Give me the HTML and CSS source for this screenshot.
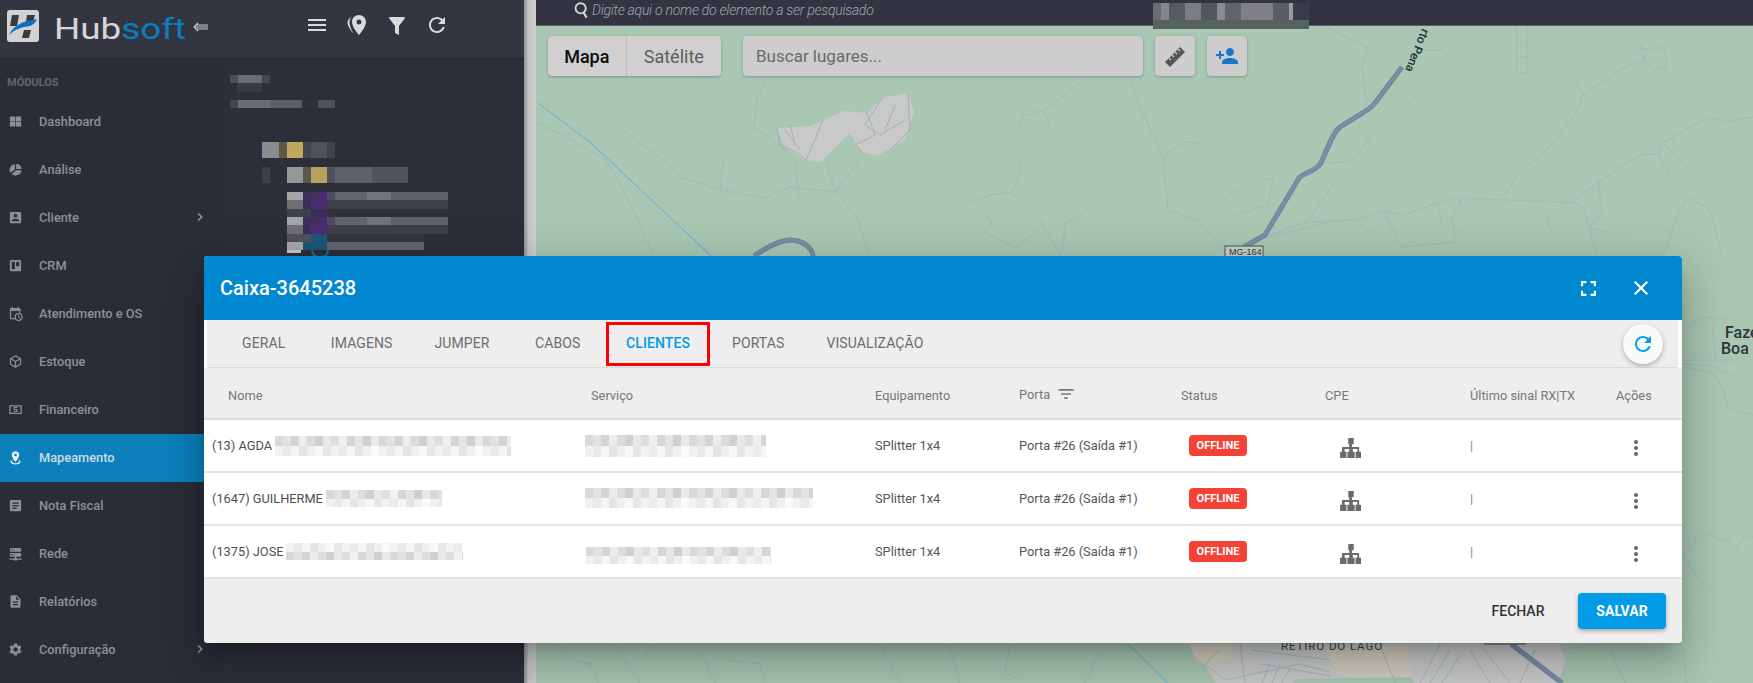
FILE: index.html
```html
<!DOCTYPE html>
<html lang="pt-BR">
<head>
<meta charset="utf-8">
<title>Hubsoft - Mapeamento</title>
<link rel="stylesheet" href="styles.css">
</head>
<body>
<div class="app">
  <aside class="side">
    <div class="brand">
      <svg class="logo" viewBox="0 0 32 32"><rect width="32" height="32" rx="3" fill="#d2d2d2"/><path d="M5 5h7l-2 11H3zM20 5h8l-2 7h-7zM17 20h7l-2 8h-7z" fill="#3b3b3d"/><path d="M2 25C6 16 15 11 30 9c-2 4-4 6-7 7-8 1-15 3-21 9z" fill="#0f6fc0"/></svg>
      <span class="wordmark"><span class="w-hub">Hub</span><span class="w-soft">soft</span></span>
      <svg class="collapse" viewBox="0 0 16 10"><path d="M5 1 1 5l4 4M4 3h11M2 5h13M4 7h11" fill="none" stroke="#c9cacd" stroke-width="1.2"/></svg>
    </div>
    <div class="modules">MÓDULOS</div>
    <nav class="nav">
      <a class="item"><svg class="ic" viewBox="0 0 24 24"><path d="M3 4h8.500v7.500H3zM12.500 4H21v7.500h-8.500zM3 12.500h8.500V20H3zM12.500 12.500H21V20h-8.500z"/></svg>Dashboard</a>
      <a class="item"><svg class="ic" viewBox="0 0 24 24"><path d="M11 3v9.500l-7.500 4.500A10 10 0 0 1 11 3zM13 3a9 9 0 0 1 8.800 8H13zM13 13h8.800A9.500 9.500 0 0 1 6 19z"/></svg>Análise</a>
      <a class="item"><svg class="ic" viewBox="0 0 24 24"><path d="M3 5v14c0 1.100.89 2 2 2h14c1.100 0 2-.9 2-2V5c0-1.100-.9-2-2-2H5c-1.110 0-2 .9-2 2zm12 4c0 1.660-1.340 3-3 3s-3-1.340-3-3 1.340-3 3-3 3 1.340 3 3zm-9 8c0-2 4-3.100 6-3.100s6 1.100 6 3.100v1H6v-1z"/></svg>Cliente<svg class="chev" viewBox="0 0 24 24"><path d="M10 6 8.590 7.410 13.170 12l-4.580 4.590L10 18l6-6z"/></svg></a>
      <a class="item"><svg class="ic" viewBox="0 0 24 24"><path fill-rule="evenodd" d="M5 3h14a2 2 0 0 1 2 2v14a2 2 0 0 1-2 2H5a2 2 0 0 1-2-2V5a2 2 0 0 1 2-2zm1 3v12h5V6zm7 0v7h5V6z"/></svg>CRM</a>
      <a class="item"><svg class="ic" viewBox="0 0 24 24"><path fill-rule="evenodd" d="M6 1h2v2h7V1h2v2h1a2 2 0 0 1 2 2v6h-2V8H5v11h6v2H5a2 2 0 0 1-2-2V5a2 2 0 0 1 2-2h1z"/><path fill-rule="evenodd" d="M17 11a6.500 6.500 0 1 1 0 13 6.500 6.500 0 0 1 0-13zm0 2a4.500 4.500 0 1 0 0 9 4.500 4.500 0 0 0 0-9zm-.8 1.500h1.500v3l2.300 1.300-.7 1.200-3.100-1.800z"/></svg>Atendimento e OS</a>
      <a class="item"><svg class="ic" viewBox="0 0 24 24"><path d="M21 16.500c0 .38-.21.71-.53.88l-7.900 4.440c-.16.12-.36.18-.57.18s-.41-.06-.57-.18l-7.900-4.440A.991.991 0 0 1 3 16.500v-9c0-.38.21-.71.53-.88l7.900-4.440c.16-.12.36-.18.57-.18s.41.06.57.18l7.900 4.440c.32.17.53.5.53.88v9zM12 4.150 6.040 7.500 12 10.850l5.960-3.350L12 4.150zM5 15.910l6 3.380v-6.710L5 9.210v6.700zm14 0v-6.700l-6 3.370v6.710l6-3.380z"/></svg>Estoque</a>
      <a class="item"><svg class="ic" viewBox="0 0 24 24"><path fill-rule="evenodd" d="M2 5h20v14H2zm2 2v10h16V7z"/><path d="M9 8h6v1.600h-4v1.600h4V16H9v-1.600h4v-1.600H9z"/></svg>Financeiro</a>
      <a class="item active"><svg class="ic" viewBox="0 0 24 24"><path d="M12 2C15.310 2 18 4.660 18 7.950C18 12.410 12 19 12 19S6 12.410 6 7.950C6 4.660 8.690 2 12 2M12 6A2 2 0 0 0 10 8A2 2 0 0 0 12 10A2 2 0 0 0 14 8A2 2 0 0 0 12 6M20 19C20 21.210 16.420 23 12 23S4 21.210 4 19C4 17.710 5.220 16.560 7.110 15.830L7.750 16.740C6.670 17.190 6 17.810 6 18.500C6 19.880 8.690 21 12 21S18 19.880 18 18.500C18 17.810 17.330 17.190 16.250 16.740L16.890 15.830C18.780 16.560 20 17.710 20 19Z"/></svg>Mapeamento</a>
      <a class="item"><svg class="ic" viewBox="0 0 24 24"><path d="M19 3H5c-1.100 0-2 .9-2 2v14c0 1.100.9 2 2 2h14c1.100 0 2-.9 2-2V5c0-1.100-.9-2-2-2zm-5 14H7v-2h7v2zm3-4H7v-2h10v2zm0-4H7V7h10v2z"/></svg>Nota Fiscal</a>
      <a class="item"><svg class="ic" viewBox="0 0 24 24"><path d="M13 19h1a1 1 0 0 1 1 1h7v2h-7a1 1 0 0 1-1 1h-4a1 1 0 0 1-1-1H2v-2h7a1 1 0 0 1 1-1h1v-2H4a1 1 0 0 1-1-1v-4a1 1 0 0 1 1-1h16a1 1 0 0 1 1 1v4a1 1 0 0 1-1 1h-7v2zM4 3h16a1 1 0 0 1 1 1v4a1 1 0 0 1-1 1H4a1 1 0 0 1-1-1V4a1 1 0 0 1 1-1zm5 4h1V5H9v2zm0 8h1v-2H9v2zM5 5v2h2V5H5zm0 8v2h2v-2H5z"/></svg>Rede</a>
      <a class="item"><svg class="ic" viewBox="0 0 24 24"><path d="M14 2H6c-1.100 0-1.990.9-1.990 2L4 20c0 1.100.89 2 1.990 2H18c1.100 0 2-.9 2-2V8l-6-6zm2 16H8v-2h8v2zm0-4H8v-2h8v2zm-3-5V3.500L18.500 9H13z"/></svg>Relatórios</a>
      <a class="item"><svg class="ic" viewBox="0 0 24 24"><path d="M19.140 12.940c.04-.3.06-.61.06-.94 0-.32-.02-.64-.07-.94l2.030-1.580c.18-.14.23-.41.12-.61l-1.920-3.320c-.12-.22-.37-.29-.59-.22l-2.390.96c-.5-.38-1.030-.7-1.620-.94L14.400 2.810c-.04-.24-.24-.41-.48-.41h-3.840c-.24 0-.43.17-.47.41L9.250 5.350c-.59.24-1.130.57-1.620.94l-2.390-.96c-.22-.08-.47 0-.59.22L2.740 8.870c-.12.21-.08.47.12.61l2.030 1.580c-.05.3-.09.63-.09.94s.02.64.07.94l-2.030 1.580c-.18.14-.23.41-.12.61l1.920 3.320c.12.22.37.29.59.22l2.390-.96c.5.38 1.030.7 1.620.94l.36 2.540c.05.24.24.41.48.41h3.840c.24 0 .44-.17.47-.41l.36-2.540c.59-.24 1.130-.56 1.620-.94l2.390.96c.22.08.47 0 .59-.22l1.920-3.320c.12-.22.07-.47-.12-.61l-2.010-1.580zM12 15.600c-1.980 0-3.600-1.620-3.600-3.600s1.620-3.600 3.600-3.600 3.600 1.620 3.600 3.600-1.620 3.600-3.600 3.600z"/></svg>Configuração<svg class="chev" viewBox="0 0 24 24"><path d="M10 6 8.590 7.410 13.170 12l-4.580 4.590L10 18l6-6z"/></svg></a>
    </nav>
  </aside>

  <section class="tree">
    <div class="tree-head">
      <svg class="th-ic" viewBox="0 0 24 24"><path d="M3 18h18v-2H3v2zm0-5h18v-2H3v2zm0-7v2h18V6H3z"/></svg>
      <svg class="th-ic" viewBox="0 0 24 24"><path d="M14 2c-3.900 0-7 3.100-7 7 0 5.200 7 13 7 13s7-7.800 7-13c0-3.900-3.100-7-7-7zm0 9.500a2.500 2.500 0 1 1 0-5 2.500 2.500 0 0 1 0 5z"/><path d="M6.500 4C4 5.500 2.500 7 2.500 9.500c0 3.500 4 9 6 11-1.500-3-4-7-4-11 0-2 .7-4 2-5.500z"/></svg>
      <svg class="th-ic" viewBox="0 0 24 24"><path d="M4.250 5.610C6.270 8.200 10 13 10 13v7l4 2v-9s3.720-4.800 5.740-7.390A1 1 0 0 0 18.950 4H5.040a1 1 0 0 0-.79 1.610z"/></svg>
      <svg class="th-ic" viewBox="0 0 24 24"><path d="M17.650 6.350C16.200 4.900 14.210 4 12 4c-4.420 0-7.990 3.580-7.990 8s3.570 8 7.990 8c3.730 0 6.840-2.550 7.730-6h-2.080c-.82 2.330-3.040 4-5.650 4-3.310 0-6-2.690-6-6s2.690-6 6-6c1.660 0 3.140.69 4.220 1.780L13 11h7V4l-2.350 2.350z"/></svg>
    </div>
    <div class="tree-body">
      <div class="tr t1"></div>
      <div class="tr t2"></div>
      <div class="tr t3"></div>
      <div class="tr t4"></div>
      <div class="tr t5"></div>
      <div class="tr t6"></div>
      <div class="tr t7"></div>
      <div class="tr t8"></div>
      <div class="tr t9"></div>
      <div class="tr t10"></div>
      <div class="tr t11"></div>
      <div class="tr t12"></div>
      <div class="tr t13"></div>
    </div>
  </section>

  <div class="gutter"></div>

  <main class="map">
    <div class="topbar">
      <svg class="tb-search" viewBox="0 0 20 20"><circle cx="9" cy="8" r="6" fill="none" stroke="#d6d7da" stroke-width="2.200"/><path d="m12.500 13 3.500 6" stroke="#d6d7da" stroke-width="2.500" fill="none"/></svg>
      <span class="tb-hint">Digite aqui o nome do elemento a ser pesquisado</span>
      <div class="tb-blur"></div>
    </div>
    <div class="canvas">
      <svg class="mapsvg" viewBox="536 26 1217 657" width="1217" height="657">
        <path class="urban" d="M1190 644 1560 644 1566 660 1558 683H1216L1205 665z"/>
        <path class="sand" d="M1189 644 1234 644 1226 660 1212 668 1197 660zM1325 650 1408 644 1412 683 1340 676z"/>
        <path class="green" d="M1295 679 1412 677 1414 683H1292z"/>
        <path class="urban" d="M777 128 811 126 823 120 844 111 867 113 882 98 908 93 914 113 905 140 877 156 862 152 849 133 836 147 821 162 806 160 785 147z"/>
        <g class="thin">
          <path d="M703 76 734 107 754 127 777 143 795 160 799 197"/>
          <path d="M767 76 757 100 754 127"/>
          <path d="M617 124 635 140 668 163 683 178 721 190 765 198 790 187 836 192 857 217 869 256"/>
          <path d="M826 163 836 192M862 157 836 192M683 178 665 195M723 160 720 190"/>
          <path d="M538 123 566 137 606 160 622 187 647 240 652 256M538 173 566 140"/>
          <path d="M1089 76 1071 90 1050 107 1022 117 1020 125M1043 110 1050 127 1045 132"/>
          <path d="M1129 76 1140 107 1163 157 1168 210 1198 220 1229 256M1163 157 1183 142 1201 143"/>
          <path d="M1020 157 1020 173 1012 192 1040 220 1061 256M1012 192 989 195 971 203"/>
          <path d="M1089 210 1066 223 1061 256M984 213 992 223 984 233 1015 247 1040 230"/>
          <path d="M1330 222 1270 237M1263 178 1273 180 1268 205 1235 215 1222 200 1245 185"/>
          <path d="M1325 27 1368 47 1362 67 1367 103M1422 50 1443 50 1450 58"/>
          <path d="M1517 27 1517 73 1527 73 1527 27M1517 40 1527 40M1517 57 1527 57"/>
          <path d="M1418 95 1407 103 1373 133 1363 147 1350 162 1323 163"/>
          <path d="M1637 47 1650 50 1665 47 1667 67 1653 70 1645 60 1628 65 1583 95 1578 110 1550 147 1520 172 1502 198"/>
          <path d="M1573 77 1583 95M1640 45 1645 60"/>
          <path d="M1265 237 1307 222 1355 220 1383 211 1403 215 1453 198 1563 202 1572 202 1623 165 1643 154 1658 154 1663 143 1707 118 1727 122 1753 117"/>
          <path d="M1338 178 1307 222M1355 220 1370 232"/>
          <path d="M1383 211 1402 247 1455 242 1452 217 1462 198M1453 223 1467 237M1437 203 1442 223"/>
          <path d="M1563 202 1547 220 1552 232M1572 202 1583 207 1597 255M1598 182 1602 210 1590 228 1607 232"/>
          <path d="M1658 154 1670 178M1663 143 1688 167M1672 140 1693 160"/>
          <path d="M1663 256 1675 220 1687 197 1710 210 1722 255"/>
          <path d="M1683 330 1702 318 1727 318M1713 327 1715 360M1683 360 1740 360M1683 367 1713 373 1725 393 1727 408 1753 415M1683 364 1712 366 1735 376"/>
          <path d="M1683 557 1703 533 1730 543 1737 550 1743 538 1753 537M1683 557 1708 592"/>
          <path d="M1684 650 1686 683M560 645 572 660 590 664 598 683M615 645 640 683M645 660 650 645M700 650 715 683M730 660 760 664 765 683M880 645 900 683M950 645 960 683M1010 645 1005 672 1020 680M1100 650 1085 683"/>
          <path d="M1220 650 1205 664 1225 680 1300 664 1330 672M1240 644 1245 683M1252 650 1330 660M1262 664 1330 676M1270 664 1262 683M1280 664 1272 683M1290 668 1282 683M1380 644 1395 683M1440 644 1420 683M1450 650 1430 683M1460 655 1442 683M1470 650 1490 683M1480 644 1510 683M1535 650 1520 683M1560 650 1600 644M1610 650 1625 683"/>
        </g>
        <g class="thin track">
          <path d="M777 128 780 145 796 152 806 160 815 140 823 120M785 130 800 150M790 125 795 145M867 113 875 135 855 145 862 152M882 98 865 125 880 135 905 120M895 105 885 130M908 93 910 130 890 150"/>
        </g>
        <path class="river" d="M538 103 591 143 711 256M1128 644 1168 683"/>
        <path class="road-edge" d="M754 256C770 245 783 239 792 240 804 241 812 248 813 256M1402 67 1375 103C1370 109 1367 110 1340 127 1335 131 1333 135 1321 163 1316 171 1306 172 1299 178L1265 235 1244 247M1511 644 1562 683"/>
        <path class="road" d="M754 256C770 245 783 239 792 240 804 241 812 248 813 256M1402 67 1375 103C1370 109 1367 110 1340 127 1335 131 1333 135 1321 163 1316 171 1306 172 1299 178L1265 235 1244 247M1511 644 1562 683"/>
        <g class="shield"><rect x="1225" y="246" width="38" height="11"/><text class="shield-t" x="1229" y="255">MG-164</text></g>
        <rect class="shield-box" x="1485" y="630" width="40" height="14"/>
        <text class="roadname" transform="translate(1422 28) rotate(112)">rto Pena</text>
        <text class="place" x="1725" y="338">Faze</text>
        <text class="place" x="1721" y="354">Boa</text>
        <text class="retiro" x="1281" y="650">RETIRO DO LAGO</text>
      </svg>
      <div class="controls">
        <div class="maptype"><span class="mt mt-on">Mapa</span><span class="mt">Satélite</span></div>
        <div class="places">Buscar lugares...</div>
        <div class="mapbtn"><svg viewBox="0 0 24 24" class="m-ic"><path d="M2 18 17 3l5 5L7 23z" fill="#555"/><path d="M6 14l2 2M9 11l2 2M12 8l2 2M15 5l2 2" stroke="#cfcfcf" stroke-width="1.200"/></svg></div>
        <div class="mapbtn"><svg viewBox="0 0 24 24" class="m-ic"><path d="M15 12c2.210 0 4-1.790 4-4s-1.790-4-4-4-4 1.790-4 4 1.790 4 4 4zm-9-2V7H4v3H1v2h3v3h2v-3h3v-2H6zm9 4c-2.670 0-8 1.340-8 4v2h16v-2c0-2.660-5.330-4-8-4z" fill="#1976c8"/></svg></div>
      </div>
    </div>
  </main>

  <div class="modal">
    <header class="m-head">
      <h2 class="m-title">Caixa-3645238</h2>
      <svg class="mh-ic mh-full" viewBox="5 5 14 14"><path d="M7 14H5v5h5v-2H7v-3zm-2-4h2V7h3V5H5v5zm12 7h-3v2h5v-5h-2v3zM14 5v2h3v3h2V5h-5z"/></svg>
      <svg class="mh-ic" viewBox="5 5 14 14"><path d="M19 6.410 17.590 5 12 10.590 6.410 5 5 6.410 10.590 12 5 17.590 6.410 19 12 13.410 17.590 19 19 17.590 13.410 12z"/></svg>
    </header>
    <div class="tabs">
      <span class="tab">GERAL</span>
      <span class="tab tab-wide">IMAGENS</span>
      <span class="tab">JUMPER</span>
      <span class="tab tab-wide">CABOS</span>
      <span class="tab tab-on tab-wide">CLIENTES</span>
      <span class="tab">PORTAS</span>
      <span class="tab">VISUALIZAÇÃO</span>
      <button class="fab"><svg viewBox="0 0 24 24"><path d="M17.650 6.350C16.200 4.900 14.210 4 12 4c-4.420 0-7.990 3.580-7.990 8s3.570 8 7.990 8c3.730 0 6.840-2.550 7.730-6h-2.080c-.82 2.330-3.040 4-5.650 4-3.310 0-6-2.690-6-6s2.690-6 6-6c1.660 0 3.140.69 4.220 1.780L13 11h7V4l-2.350 2.350z"/></svg></button>
    </div>
    <div class="grid ghead">
      <span class="pl-name">Nome</span>
      <span class="pl-serv">Serviço</span>
      <span>Equipamento</span>
      <span class="porta">Porta<svg viewBox="0 0 24 24"><path d="M10 18h4v-2h-4v2zM3 6v2h18V6H3zm3 7h12v-2H6v2z"/></svg></span>
      <span>Status</span>
      <span>CPE</span>
      <span>Último sinal RX|TX</span>
      <span>Ações</span>
    </div>
    <div class="grid grow">
      <span class="cell-name">(13) AGDA<i class="blur n1"></i></span>
      <span><i class="blur s1"></i></span>
      <span>SPlitter 1x4</span>
      <span>Porta #26 (Saída #1)</span>
      <span class="pl-badge"><b class="badge">OFFLINE</b></span>
      <span class="pl-cpe"><svg class="cpe" viewBox="0 0 24 22"><path d="M9 0h6v7h-2v3h7a1 1 0 0 1 1 1v4h2v7h-6v-7h2v-3h-5v3h2v7H8v-7h2v-3H5v3h2v7H0v-7h2v-4a1 1 0 0 1 1-1h7V7H9z"/></svg></span>
      <span class="sig">|</span>
      <span class="pl-act"><svg class="kebab" viewBox="0 0 24 24"><path d="M12 8c1.100 0 2-.9 2-2s-.9-2-2-2-2 .9-2 2 .9 2 2 2zm0 2c-1.100 0-2 .9-2 2s.9 2 2 2 2-.9 2-2-.9-2-2-2zm0 6c-1.100 0-2 .9-2 2s.9 2 2 2 2-.9 2-2-.9-2-2-2z"/></svg></span>
    </div>
    <div class="grid grow">
      <span class="cell-name">(1647) GUILHERME<i class="blur n2"></i></span>
      <span><i class="blur s2"></i></span>
      <span>SPlitter 1x4</span>
      <span>Porta #26 (Saída #1)</span>
      <span class="pl-badge"><b class="badge">OFFLINE</b></span>
      <span class="pl-cpe"><svg class="cpe" viewBox="0 0 24 22"><path d="M9 0h6v7h-2v3h7a1 1 0 0 1 1 1v4h2v7h-6v-7h2v-3h-5v3h2v7H8v-7h2v-3H5v3h2v7H0v-7h2v-4a1 1 0 0 1 1-1h7V7H9z"/></svg></span>
      <span class="sig">|</span>
      <span class="pl-act"><svg class="kebab" viewBox="0 0 24 24"><path d="M12 8c1.100 0 2-.9 2-2s-.9-2-2-2-2 .9-2 2 .9 2 2 2zm0 2c-1.100 0-2 .9-2 2s.9 2 2 2 2-.9 2-2-.9-2-2-2zm0 6c-1.100 0-2 .9-2 2s.9 2 2 2 2-.9 2-2-.9-2-2-2z"/></svg></span>
    </div>
    <div class="grid grow">
      <span class="cell-name">(1375) JOSE<i class="blur n3 flip"></i></span>
      <span><i class="blur s3"></i></span>
      <span>SPlitter 1x4</span>
      <span>Porta #26 (Saída #1)</span>
      <span class="pl-badge"><b class="badge">OFFLINE</b></span>
      <span class="pl-cpe"><svg class="cpe" viewBox="0 0 24 22"><path d="M9 0h6v7h-2v3h7a1 1 0 0 1 1 1v4h2v7h-6v-7h2v-3h-5v3h2v7H8v-7h2v-3H5v3h2v7H0v-7h2v-4a1 1 0 0 1 1-1h7V7H9z"/></svg></span>
      <span class="sig">|</span>
      <span class="pl-act"><svg class="kebab" viewBox="0 0 24 24"><path d="M12 8c1.100 0 2-.9 2-2s-.9-2-2-2-2 .9-2 2 .9 2 2 2zm0 2c-1.100 0-2 .9-2 2s.9 2 2 2 2-.9 2-2-.9-2-2-2zm0 6c-1.100 0-2 .9-2 2s.9 2 2 2 2-.9 2-2-.9-2-2-2z"/></svg></span>
    </div>
    <footer class="m-foot">
      <button class="btn-text">FECHAR</button>
      <button class="btn-save">SALVAR</button>
    </footer>
  </div>
</div>
</body>
</html>
```

FILE: styles.css
```css
:root {
  --dark: linear-gradient(90deg, #d9d9d9 0 8px, #e2e2e2 8px 16px, #d4d4d4 16px 24px, #ececec 24px 32px, #dcdcdc 32px 40px, #d0d0d0 40px 48px, #e8e8e8 48px 56px, #dedede 56px 64px, #f0f0f0 64px 72px, #d6d6d6 72px 80px, #e4e4e4 80px 88px, #cfcfcf 88px 96px, #e9e9e9 96px 104px);
  --light: linear-gradient(90deg, #f1f1f1 0 8px, #e9e9e9 8px 16px, #f5f5f5 16px 24px, #e4e4e4 24px 32px, #efefef 32px 40px, #f8f8f8 40px 48px, #e7e7e7 48px 56px, #f2f2f2 56px 64px, #ebebeb 64px 72px, #f6f6f6 72px 80px, #e5e5e5 80px 88px, #f0f0f0 88px 96px, #fafafa 96px 104px);
}
* { box-sizing: border-box; }
html, body { margin: 0; height: 100%; overflow: hidden; }
body { font-family: Roboto, "Liberation Sans", sans-serif; font-size: 13px; background: #2b2e39; }
.app { position: relative; display: flex; width: 1753px; height: 683px; overflow: hidden; }

/* sidebar */
.side { width: 223px; flex: none; background: #2a2d38; }
.brand { height: 59px; display: flex; align-items: flex-start; background: #333641; border-bottom: 1px solid #25272f; padding: 10px 0 0 7px; }
.logo { width: 32px; height: 32px; flex: none; }
.wordmark { display: inline-block; width: 136px; margin: -2px 0 0 15px; font-size: 29px; line-height: 42px; transform: scaleX(1.27); transform-origin: 0 50%; white-space: nowrap; font-weight: 400; }
.w-hub { color: #d6d6d9; }
.w-soft { color: #0a7fbe; }
.collapse { width: 16px; height: 10px; margin: 12px 0 0 3px; flex: none; }
.modules { height: 39px; padding: 17px 0 0 7px; font-size: 11px; font-weight: 700; line-height: 14px; color: #63656d; }
.nav { display: flex; flex-direction: column; }
.item { position: relative; display: flex; align-items: center; height: 48px; padding: 0 0 2px 8px; color: #8e9096; font-weight: 500; font-size: 12.800px; }
.item.active { background: #0b80bb; color: #cfdbe4; }
.ic { width: 15px; height: 15px; margin-right: 16px; fill: #8e8f94; flex: none; }
.active .ic { fill: #e6eef3; }
.chev { width: 16px; height: 16px; fill: #a2a3a7; margin-left: auto; margin-right: 15px; }

/* tree panel */
.tree { width: 301px; flex: none; background: #2c2f3a; }
.tree-head { height: 59px; display: flex; align-items: flex-start; justify-content: center; gap: 16px; padding: 13px 0 0 6px; background: #333641; border-bottom: 1px solid #25272f; }
.th-ic { width: 24px; height: 24px; fill: #d9dadc; flex: none; }
.tree-body { padding-top: 16px; }
.tr { height: 8.300px; }
.t1 { margin-left: 7px; width: 40px; background: linear-gradient(90deg, #4b4d57 0 8px, #6a6c74 8px 32px, #45474f 32px); }
.t2 { margin-left: 14px; width: 25px; background: #383a45; }
.t3 { margin-left: 7px; width: 105px; background: linear-gradient(90deg, #44464f 0 8px, #6b6d75 8px 40px, #5c5e67 40px 72px, #2f323d 72px 88px, #50525b 88px); margin-bottom: 34px; height: 16.600px; background-size: 100% 50%; background-position: 0 100%; background-repeat: no-repeat; }
.t4 { margin-left: 39px; width: 73px; height: 16px; margin-bottom: 9px; background: linear-gradient(90deg, #8b8c90 0 17px, #5c5848 17px 25px, #c2a85f 25px 41px, #45464c 41px 49px, #50525a 49px 65px, #3f414b 65px); }
.t5 { margin-left: 39px; width: 146px; height: 16px; margin-bottom: 9px; background: linear-gradient(90deg, #3d3f49 0 8px, transparent 8px 25px, #96979b 25px 41px, #5b5749 41px 49px, #b8a060 49px 65px, #50505a 65px 73px, #5e606a 73px 110px, #51535d 110px); }
.t6, .t9 { margin-left: 64px; width: 161px; background: linear-gradient(90deg, #a5a6a9 0 16px, #41305f 16px 32px, #4a2d73 32px 40px, #4f4a66 40px 48px, #62646e 48px 80px, #71737b 80px 104px, #5f616b 104px); }
.t7, .t10 { margin-left: 64px; width: 161px; background: linear-gradient(90deg, #6f7075 0 16px, #3a2d59 16px 24px, #4a2d73 24px 40px, #3d3f4a 40px); }
.t8 { margin-left: 64px; width: 50px; background: linear-gradient(90deg, #3e404a 0 24px, #3a2d59 24px 40px, #33303f 40px); }
.t11 { margin-left: 64px; width: 137px; background: linear-gradient(90deg, #50525b 0 24px, #1d5775 24px 40px, #33353f 40px); }
.t12 { margin-left: 64px; width: 137px; background: linear-gradient(90deg, #a8a9ab 0 16px, #1d5775 16px 40px, #62646e 40px); }
.t13 { position: relative; margin-left: 64px; width: 14px; height: 3px; background: #c8c8c8; }
.t13::after { content: ""; position: absolute; left: 24px; top: 0; width: 14px; height: 6px; border: 2px solid #1d6d94; border-top: 0; border-radius: 0 0 8px 8px; }

.gutter { width: 12px; flex: none; background: linear-gradient(90deg, #8f8f8f, #c8c8c8 40%, #cfcfcf); }

/* map */
.map { flex: 1; display: flex; flex-direction: column; min-width: 0; }
.topbar { position: relative; z-index: 3; height: 26px; flex: none; display: flex; align-items: flex-start; padding-left: 37px; background: #323541; border-bottom: 1px solid #5a5f66; }
.tb-search { width: 17px; height: 18px; margin-top: 1px; flex: none; }
.tb-hint { margin: 1px 0 0 2px; font-size: 14px; letter-spacing: -.25px; line-height: 18px; font-style: italic; font-weight: 300; color: #a3a5ab; white-space: nowrap; }
.tb-blur { position: absolute; left: 617px; top: 3px; width: 156px; height: 26px; background:
  linear-gradient(#56625f, #56625f) 0 100% / 100% 9px no-repeat,
  linear-gradient(90deg, #6b6d74 0 8px, #85868b 8px 16px, #565862 16px 32px, #7c7d83 32px 48px, #53555f 48px 64px, #8a8b90 64px 72px, #62646d 72px 88px, #7f8086 88px 120px, #5b5d66 120px 136px, #9a9a9e 136px 140px, #3a3d47 140px);
}
.canvas { position: relative; flex: 1; background: #a9c7b3; overflow: hidden; }
.mapsvg { position: absolute; left: 0; top: 0; display: block; }
.thin path { fill: none; stroke: #a8b3c0; stroke-width: 1; stroke-linejoin: round; }
.track path { stroke: #a8acb4; }
.urban { fill: #c8cac9; }
.sand { fill: #d2cdc0; }
.green { fill: #a9c7b3; }
.river { fill: none; stroke: #7db6cf; stroke-width: 1.500; }
.road-edge { fill: none; stroke: #6a7f98; stroke-width: 5; stroke-linejoin: round; }
.road { fill: none; stroke: #7a8fa6; stroke-width: 3.500; stroke-linejoin: round; }
.shield rect, .shield-box { fill: #c8d2c8; stroke: #4a4f52; stroke-width: 1; }
.shield-t { font-family: "Liberation Sans", sans-serif; font-size: 9px; fill: #333; }
.roadname { font-family: Roboto, sans-serif; font-size: 12px; font-weight: 500; fill: #26303c; }
.place { font-family: Roboto, sans-serif; font-size: 16px; font-weight: 500; fill: #2f3338; }
.retiro { font-family: Roboto, sans-serif; font-size: 11.500px; fill: #3c4044; letter-spacing: .9px; }
.controls { position: relative; display: flex; height: 40px; margin: 10px 0 0 12px; }
.maptype { display: flex; width: 173px; height: 40px; border-radius: 4px; background: #d0d0d0; box-shadow: 0 1px 3px rgba(0,0,0,.25); overflow: hidden; }
.mt { display: flex; align-items: center; justify-content: center; flex: 95; font-size: 18px; color: #5e5e5e; }
.mt-on { flex: 78; color: #0b0b0b; font-weight: 500; border-right: 1px solid #bdbdbd; }
.places { width: 400px; height: 40px; margin-left: 22px; padding-left: 13px; border-radius: 4px; background: #cdcdcd; color: #6a6a6a; font-size: 17px; line-height: 40px; box-shadow: 0 1px 3px rgba(0,0,0,.25); }
.mapbtn { width: 40px; height: 40px; margin-left: 12px; display: flex; align-items: center; justify-content: center; border-radius: 4px; background: #cdcdcd; box-shadow: 0 1px 3px rgba(0,0,0,.25); }
.m-ic { width: 24px; height: 24px; }

/* modal */
.modal { position: absolute; left: 204px; top: 256px; width: 1478px; height: 387px; display: flex; flex-direction: column; background: #fff; border-radius: 4px; box-shadow: 0 11px 15px -7px rgba(0,0,0,.2), 0 24px 38px 3px rgba(0,0,0,.14), 0 9px 46px 8px rgba(0,0,0,.12); }
.m-head { height: 64px; flex: none; display: flex; align-items: center; padding: 0 34px 0 16px; background: #0288d1; border-radius: 4px 4px 0 0; }
.m-title { margin: 0 auto 0 0; font-size: 20px; font-weight: 500; color: #fff; }
.mh-ic { width: 14px; height: 14px; fill: #fff; margin-left: 38px; flex: none; }
.mh-ic.mh-full { width: 15px; height: 15px; }
.tabs { height: 48px; flex: none; display: flex; align-items: center; margin: 0 4px 0 3px; padding-left: 14px; background: #eee; border-bottom: 1px solid #dcdcdc; }
.tab { position: relative; padding: 0 21px; height: 100%; line-height: 46px; font-size: 14px; color: #6d6d6d; font-weight: 400; letter-spacing: .1px; }
.tab-wide { margin-left: 3.500px; }
.tab-on { color: #039be5; font-weight: 500; }
.tab-on::after { content: ""; position: absolute; left: 1px; right: 1px; top: 2px; bottom: 1px; border: 3px solid #f00; }
.fab { margin: 0 15px 0 auto; width: 40px; height: 40px; padding: 8px; border: 0; border-radius: 50%; background: #fafafa; box-shadow: 0 2px 5px rgba(0,0,0,.28); }
.fab svg { display: block; width: 24px; height: 24px; fill: #03a0ea; }
.grid { display: grid; grid-template-columns: 381px 290px 144px 162px 144px 145px 146px 66px; align-items: center; flex: none; }
.ghead { height: 52px; padding-top: 4px; background: #eee; border-bottom: 2px solid #dcdcdc; color: #777; font-size: 12.800px; }
.pl-name { padding-left: 24px; }
.pl-serv { padding-left: 6px; }
.porta { display: flex; align-items: center; margin-top: -2px; }
.porta svg { width: 20px; height: 20px; margin-left: 6px; fill: #777; }
.grow { height: 53px; background: #fff; border-bottom: 2px solid #e3e3e3; color: #555; font-size: 12.800px; }
.cell-name { display: flex; align-items: center; padding-left: 8px; color: #4e4e4e; white-space: nowrap; }
.blur { display: block; background: var(--dark) 0 0 / 104px 50% repeat-x, var(--light) 0 100% / 104px 50% repeat-x; }
.blur.flip { background: var(--light) 0 0 / 104px 50% repeat-x, var(--dark) 0 100% / 104px 50% repeat-x; }
.n1 { width: 236px; height: 20px; margin-left: 3px; }
.n2 { width: 116px; height: 17px; margin-left: 3px; }
.n3 { width: 177px; height: 17px; margin-left: 2px; margin-top: -1px; }
.s1 { width: 181px; height: 22px; }
.s2 { width: 228px; height: 20px; margin-top: -2px; }
.s3 { width: 185px; height: 17px; margin: 7px 0 0 1px; }
.pl-badge { padding-left: 8px; display: flex; }
.badge { display: block; width: 58px; height: 21px; border-radius: 4px; background: #f44336; color: #fff; font-size: 11px; font-weight: 700; line-height: 21px; text-align: center; }
.pl-cpe { padding-left: 15px; display: flex; }
.cpe { width: 22px; height: 20px; fill: #6b6b6b; margin-top: 5px; }
.sig { color: #888; }
.pl-act { padding-left: 8px; display: flex; }
.kebab { width: 24px; height: 24px; fill: #666; margin-top: 5px; }
.m-foot { flex: 1; display: flex; align-items: flex-start; justify-content: flex-end; padding: 14px 16px 0 0; background: #eee; border-radius: 0 0 4px 4px; }
.btn-text { width: 54px; height: 36px; margin-right: 33px; padding: 0; border: 0; background: none; font: 500 14px Roboto, sans-serif; color: #333; }
.btn-save { width: 88px; height: 36px; padding: 0; border: 0; border-radius: 4px; background: #039be5; color: #fff; font: 700 14px Roboto, sans-serif; box-shadow: 0 2px 4px rgba(0,0,0,.3); }
```
